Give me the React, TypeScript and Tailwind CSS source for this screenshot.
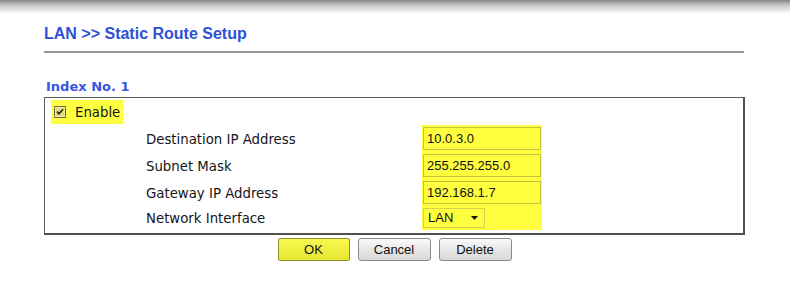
export default function App() {
  const labels = [
    "Destination IP Address",
    "Subnet Mask",
    "Gateway IP Address",
    "Network Interface",
  ];
  const values = ["10.0.3.0", "255.255.255.0", "192.168.1.7"];
  return (
    <div className="w-[790px] h-[295px] bg-white overflow-hidden">
      <div className="h-[14px] bg-[linear-gradient(to_bottom,#858585,#c4c4c4_35%,#ffffff)]" />
      <div className="px-[44px] w-[746px]">
        <h1 className="mt-[11px] text-[16px] leading-[18px] font-bold text-[#2d50d8] font-['Liberation_Sans',Arial,sans-serif]">
          LAN &gt;&gt; Static Route Setup
        </h1>
        <div className="mt-[8px] h-[2px] w-[700px] bg-[#959595]" />
        <div className="mt-[26px] ml-[2px] h-[16px] text-[13px] leading-[16px] font-bold text-[#3657de] font-['DejaVu_Sans',Verdana,sans-serif]">
          Index No. 1
        </div>
        <div className="mt-[2px] w-[701px] border-l border-t border-r-2 border-b-2 border-l-[#5a5a5a] border-t-[#5a5a5a] border-r-[#505050] border-b-[#505050] pb-[3px] font-['DejaVu_Sans',Verdana,sans-serif] text-[13.3px] text-[#141420]">
          <div className="mt-[2px] ml-[6px] w-[72px] h-[24px] bg-[#ffff40] flex items-center">
            <svg width="12" height="12" viewBox="0 0 12 12" className="ml-[3px]">
              <rect x="0.5" y="0.5" width="11" height="11" fill="#dede86" stroke="#6e6e40" />
              <rect x="1.5" y="1.5" width="9" height="9" fill="none" stroke="#ecec9e" />
              <path d="M3 5.6 L5 7.8 L9 3.3" fill="none" stroke="#2a2a10" strokeWidth="1.7" />
            </svg>
            <span className="ml-[9px] leading-[16px] pt-[1px]">Enable</span>
          </div>
          <div className="mt-[1px] flex">
            <div className="ml-[101px] w-[276px] flex flex-col gap-[4px] py-[2px]">
              {labels.map((l, i) => (
                <div key={l} className={`${i === 3 ? "h-[20px]" : "h-[23px]"} flex items-center leading-[16px] pt-[2px]`}>
                  {l}
                </div>
              ))}
            </div>
            <div className="w-[120px] bg-[#ffff40] flex flex-col gap-[4px] py-[2px] px-[1px] font-['Liberation_Sans',Tahoma,sans-serif] text-[13px] text-[#101010]">
              {values.map((v) => (
                <div key={v} className="h-[23px] w-[118px] border border-[#c4c43c] bg-[#ffff40] flex items-center pl-[3px] pt-[1px]">
                  {v}
                </div>
              ))}
              <div className="h-[20px] w-[62px] border border-[#d4d44a] bg-[#ffff40] flex items-center pl-[4px] justify-between pr-[6px]">
                <span>LAN</span>
                <svg width="7" height="4" viewBox="0 0 7 4">
                  <path d="M0 0 H7 L3.5 4 Z" fill="#111" />
                </svg>
              </div>
            </div>
          </div>
        </div>
        <div className="mt-[3px] w-[701px] flex justify-center gap-[8px] font-['Liberation_Sans',Tahoma,sans-serif] text-[13px] text-[#111]">
          <button className="w-[72px] h-[23px] border border-[#8e8e34] rounded-[2px] bg-[linear-gradient(to_bottom,#f8f850,#e6e632)]">
            OK
          </button>
          <button className="w-[73px] h-[23px] border border-[#8a8a8a] rounded-[3px] bg-[linear-gradient(to_bottom,#fbfbfb,#e6e6e6_50%,#d8d8d8)]">
            Cancel
          </button>
          <button className="w-[73px] h-[23px] border border-[#8a8a8a] rounded-[3px] bg-[linear-gradient(to_bottom,#fbfbfb,#e6e6e6_50%,#d8d8d8)]">
            Delete
          </button>
        </div>
      </div>
    </div>
  );
}
